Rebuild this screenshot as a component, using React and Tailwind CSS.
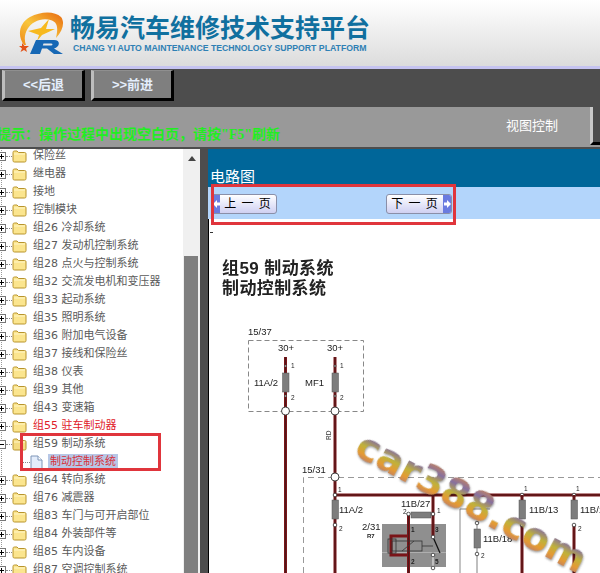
const cjk = "font-['DejaVu_Sans','Noto_Sans_CJK_SC',sans-serif]";
const arial = "font-['Liberation_Sans','Noto_Sans_CJK_SC',sans-serif]";

const treeRows = [
  { label: "保险丝" },
  { label: "继电器" },
  { label: "接地" },
  { label: "控制模块" },
  { label: "组26 冷却系统" },
  { label: "组27 发动机控制系统" },
  { label: "组28 点火与控制系统" },
  { label: "组32 交流发电机和变压器" },
  { label: "组33 起动系统" },
  { label: "组35 照明系统" },
  { label: "组36 附加电气设备" },
  { label: "组37 接线和保险丝" },
  { label: "组38 仪表" },
  { label: "组39 其他" },
  { label: "组43 变速箱" },
  { label: "组55 驻车制动器", red: true },
  { label: "组59 制动系统", open: true },
  { label: "制动控制系统", child: true },
  { label: "组64 转向系统" },
  { label: "组76 减震器" },
  { label: "组83 车门与可开启部位" },
  { label: "组84 外装部件等" },
  { label: "组85 车内设备" },
  { label: "组87 空调控制系统" },
];

const Logo = () => (
  <svg width="46" height="44" viewBox="0 0 46 44" className="shrink-0">
    <defs>
      <linearGradient id="ring" x1="0" y1="1" x2="1" y2="0">
        <stop offset="0" stopColor="#ef8a1a" />
        <stop offset="0.45" stopColor="#f8c63c" />
        <stop offset="1" stopColor="#e8690f" />
      </linearGradient>
    </defs>
    <path
      d="M6 34C-1 25 1 12 12 6C23 0 37 0 43 6C47 11 45 20 38 27C40 18 40 12 34 9.5C25 6 14 10 9.5 18C6.5 23 6 29 8 34Z"
      fill="url(#ring)"
    />
    <path d="M10 20L23 17L31 8L28 18L37 18L24 24L19 30L21 24Z" fill="#f7b91e" />
    <path d="M4 32L6.5 35L11 35L8 37.5L9 41L6 39L2.5 41L4 37.5L1 35L4 35Z" fill="#e2531a" />
    <path
      d="M12 43L18 29H36C43 29 42 36 36 37.5L45 43H36L29 37.5H24L22 43ZM25.5 32.5L24.8 34.5H33C35 34.5 35 32.5 33 32.5Z"
      fill="#1768b5"
      fillRule="evenodd"
    />
  </svg>
);

const NavButton = ({ children }) => (
  <button className="w-[83px] h-[31px] bg-[#7f7f7f] border-l-[3px] border-l-[#bdbdbd] border-t border-t-[#8f8f8f] border-r-[3px] border-r-black border-b-[3px] border-b-black text-[13px] font-bold text-[#e4eefc] font-['Liberation_Sans','Noto_Sans_CJK_SC',sans-serif]">
    {children}
  </button>
);

const Folder = ({ open }) => (
  <svg width="15" height="14" viewBox="0 0 15 14" className="shrink-0">
    <path
      d="M1 3.5C1 2.5 1.5 2 2.5 2H5L6.5 3.5H12.5C13.5 3.5 14 4 14 5V11.5C14 12.5 13.5 13 12.5 13H2.5C1.5 13 1 12.5 1 11.5Z"
      fill={open ? "#f4dc82" : "#fbe58e"}
      stroke="#b8942c"
      strokeWidth="1"
    />
    <path d="M2 5H13" stroke="#fff6c8" strokeWidth="1" />
  </svg>
);

const Expander = ({ open }) => (
  <span className="relative -ml-[5px] w-[9px] h-[9px] shrink-0 border border-[#777] bg-white">
    <span className="absolute left-[1px] top-[3px] w-[5px] h-px bg-black" />
    {!open && <span className="absolute left-[3px] top-[1px] w-px h-[5px] bg-black" />}
  </span>
);

const TreeRow = ({ row }) => {
  if (row.child) {
    return (
      <div className="flex items-center h-[18px] pl-[20px]">
        <span className="w-[8px] border-t border-dotted border-[#888]" />
        <svg width="13" height="15" viewBox="0 0 13 15" className="shrink-0">
          <path d="M1 1H8L12 5V14H1Z" fill="#e4edfb" stroke="#7f96b8" />
          <path d="M8 1V5H12" fill="#fff" stroke="#7f96b8" />
        </svg>
        <span className="ml-[5px] px-[2px] h-[16px] leading-[16px] bg-[#b7c7e6] text-[11px] text-[#d8323c]">
          {row.label}
        </span>
      </div>
    );
  }
  return (
    <div className="flex items-center h-[18px]">
      <Expander open={row.open} />
      <span className="w-[6px] border-t border-dotted border-[#888]" />
      <Folder open={row.open} />
      <span className={`ml-[6px] text-[11px] whitespace-nowrap ${row.red ? "text-[#e0202a]" : "text-[#5a5a5a]"}`}>
        {row.label}
      </span>
    </div>
  );
};

const PageButton = ({ children, next }) => (
  <button
    className={`flex items-center w-[66px] h-[20px] rounded-[3px] border border-[#8a8fa8] bg-gradient-to-b from-white to-[#cfd0f2] overflow-hidden ${next ? "flex-row-reverse" : ""}`}
  >
    <span className="flex items-center justify-center w-[8px] h-full bg-[#6a7be0] text-white">
      <svg width="7" height="8" viewBox="0 0 7 8">
        {next ? <path d="M0 2.5H3V0L7 4L3 8V5.5H0Z" fill="#fff" /> : <path d="M7 2.5H4V0L0 4L4 8V5.5H7Z" fill="#fff" />}
      </svg>
    </span>
    <span className="flex-1 text-center text-[12px] leading-none text-black tracking-[1px]">{children}</span>
  </button>
);

const Wire = ({ d, w = 3 }) => (
  <>
    <path d={d} fill="none" stroke="#7a1418" strokeWidth={w} />
    <path d={d} fill="none" stroke="#3a1a1a" strokeWidth="0.7" />
  </>
);

const Dot = ({ x, y, r = 1.8 }) => <circle cx={x} cy={y} r={r} fill="#fff" stroke="#333" strokeWidth="0.8" />;

const Junction = ({ x, y }) => <circle cx={x} cy={y} r="4" fill="#fff" stroke="#444" strokeWidth="1" />;

const VFuse = ({ x, y, h = 19 }) => <rect x={x - 3} y={y} width="6.5" height={h} fill="#7d7d7d" stroke="#555" strokeWidth="0.5" />;

const Lbl = ({ x, y, size = 9.5, weight = 400, fill = "#222", children }) => (
  <text x={x} y={y} fontSize={size} fontWeight={weight} fill={fill} fontFamily="Liberation Sans, sans-serif">
    {children}
  </text>
);

const Diagram = () => (
  <svg width="391" height="273" viewBox="209 300 391 273" className="block blur-[0.3px]">
    <defs>
      <linearGradient id="mark" gradientUnits="userSpaceOnUse" x1="0" y1="484" x2="0" y2="516" spreadMethod="repeat">
        <stop offset="0" stopColor="#c9875a" />
        <stop offset="0.3" stopColor="#86709f" />
        <stop offset="0.6" stopColor="#bfb23a" />
        <stop offset="0.85" stopColor="#e59a33" />
        <stop offset="1" stopColor="#c9875a" />
      </linearGradient>
    </defs>

    <Lbl x={248} y={335}>15/37</Lbl>
    <rect x="248.5" y="340.5" width="115" height="71" fill="none" stroke="#888" strokeDasharray="5 3" />
    <Lbl x={278} y={351}>30+</Lbl>
    <Lbl x={327} y={351}>30+</Lbl>

    <Wire d="M285.5 357V573" />
    <Wire d="M335 357V573" />
    <VFuse x={285.5} y={373} />
    <VFuse x={335} y={373} />
    <Dot x={285.5} y={366} r={1} />
    <Dot x={285.5} y={396} r={1} />
    <Dot x={335} y={366} r={1} />
    <Dot x={335} y={396} r={1} />
    <Lbl x={291} y={368} size={6.5}>1</Lbl>
    <Lbl x={291} y={400} size={6.5}>2</Lbl>
    <Lbl x={340} y={368} size={6.5}>1</Lbl>
    <Lbl x={340} y={400} size={6.5}>2</Lbl>
    <Lbl x={254} y={386}>11A/2</Lbl>
    <Lbl x={305} y={386}>MF1</Lbl>
    <Junction x={285.5} y={411} />
    <Junction x={335} y={411} />
    <text x="331" y="440" fontSize="6.5" fill="#333" fontFamily="Liberation Sans, sans-serif" transform="rotate(-90 331 440)">RD</text>

    <Lbl x={302} y={473}>15/31</Lbl>
    <path d="M303.5 573V477.5H600" fill="none" stroke="#999" strokeDasharray="6 4" />
    <Junction x={335} y={477} />

    <Wire d="M335 495H600" />
    <Dot x={335} y={495} />
    <Dot x={522} y={495} />
    <Dot x={574} y={495} />
    <Lbl x={338} y={492} size={6.5}>1</Lbl>
    <Lbl x={524} y={491} size={6.5}>1</Lbl>
    <Lbl x={576} y={491} size={6.5}>1</Lbl>

    <VFuse x={335} y={500} />
    <Dot x={335} y={525} />
    <Lbl x={339} y={513}>11A/2</Lbl>
    <Lbl x={339} y={531} size={6.5}>2</Lbl>

    <Wire d="M522 495V503M522 525V573" />
    <VFuse x={522} y={500} />
    <Dot x={522} y={525} />
    <Lbl x={529} y={513}>11B/13</Lbl>

    <Wire d="M574 495V503M574 525V573" />
    <VFuse x={574} y={500} />
    <Dot x={574} y={525} />
    <Lbl x={580} y={513}>11B/1</Lbl>
    <Lbl x={578} y={531} size={6.5}>2</Lbl>

    <rect x="382" y="524" width="64" height="43" fill="#8f8f8f" />
    <path d="M382 552.5H446" stroke="#c4c4c4" strokeWidth="0.6" />
    <Wire d="M433 495V537" />
    <Wire d="M408.5 513V573" />
    <path d="M408 536H391V555H408" fill="none" stroke="#7a1418" strokeWidth="3" />
    <rect x="392" y="541" width="30" height="10" fill="none" stroke="#333" strokeWidth="0.8" />
    <rect x="388" y="539" width="8" height="14" fill="none" stroke="#333" strokeWidth="0.8" />
    <path d="M402 551L414 541M422 546H433" fill="none" stroke="#333" strokeWidth="0.8" />
    <path d="M433 537L440 553" stroke="#111" strokeWidth="1.2" />
    <path d="M433 555V568" stroke="#eee" strokeWidth="1" />
    <rect x="411" y="512" width="20" height="6" fill="#7d7d7d" stroke="#555" strokeWidth="0.5" />
    <Dot x={408.5} y={514} />
    <Dot x={433} y={514} />
    <Dot x={433} y={537} />
    <Dot x={433} y={555} />
    <Dot x={433} y={568} />
    <Lbl x={401} y={507}>11B/27</Lbl>
    <Lbl x={403} y={514} size={6.5}>2</Lbl>
    <Lbl x={437} y={513} size={6.5}>1</Lbl>
    <Lbl x={362} y={530}>2/31</Lbl>
    <Lbl x={367} y={538} size={6} weight={700}>R7</Lbl>
    <Lbl x={411} y={532} size={6.5} weight={700}>1</Lbl>
    <Lbl x={435} y={532} size={6.5} weight={700}>3</Lbl>
    <Lbl x={411} y={564} size={6.5} weight={700}>2</Lbl>
    <Lbl x={435} y={564} size={6.5} weight={700}>5</Lbl>

    <path d="M460 573V509H490" fill="none" stroke="#888" />
    <path d="M477 523V573" stroke="#aaa" strokeWidth="1.5" />
    <VFuse x={477} y={529} />
    <Dot x={477} y={523} />
    <Dot x={477} y={554} />
    <Lbl x={483} y={542}>11B/18</Lbl>
    <Lbl x={481} y={558} size={6.5}>2</Lbl>

    <text
      x="473"
      y="516"
      textAnchor="middle"
      fontSize="39"
      fontWeight="700"
      fontFamily="DejaVu Sans, sans-serif"
      fill="url(#mark)"
      transform="rotate(28 473 500)"
      className="drop-shadow-[1px_1px_1px_rgba(0,0,0,0.4)]"
    >
      car388.com
    </text>
  </svg>
);

export default function App() {
  return (
    <div className="relative w-[600px] h-[573px] overflow-hidden bg-[#4d4d4d] flex flex-col">
      {/* logo header */}
      <div className="h-[66px] shrink-0 flex items-center pl-[18px] bg-gradient-to-b from-white to-[#dcdcdc]">
        <Logo />
        <div className="ml-[6px] -mt-[1px] flex flex-col">
          <div className="text-[25px] leading-[30px] font-bold text-[#10709f] whitespace-nowrap font-['Noto_Sans_CJK_SC',sans-serif]">
            畅易汽车维修技术支持平台
          </div>
          <div className={`ml-[3px] mt-[2px] text-[8.7px] leading-[11px] font-bold text-[#2f80b4] whitespace-nowrap ${arial}`}>
            CHANG YI AUTO MAINTENANCE TECHNOLOGY SUPPORT PLATFORM
          </div>
        </div>
      </div>
      <div className="h-[3px] shrink-0 bg-[#c5c3f0]" />

      {/* back / forward */}
      <div className="h-[38px] shrink-0 flex gap-[6px] pl-[2px] pt-px">
        <NavButton>&lt;&lt;后退</NavButton>
        <NavButton>&gt;&gt;前进</NavButton>
      </div>

      {/* hint bar */}
      <div className="h-[40px] shrink-0 flex bg-[#999]">
        <div className="-ml-[3px] self-end mb-[3px] text-[14px] leading-[18px] font-bold text-[#22ee22] whitespace-nowrap font-['Liberation_Serif','Noto_Sans_CJK_SC',serif]">
          提示：操作过程中出现空白页，请按"F5"刷新
        </div>
        <div className={`ml-[226px] mt-[11px] text-[13px] leading-[16px] text-white whitespace-nowrap ${arial}`}>
          视图控制
        </div>
        <div className="ml-auto w-[10px] h-[38px] border-l-[3px] border-[#c9c9c9] bg-[#4d4d4d] border-b-[3px] border-b-black" />
      </div>

      <div className="flex-1 min-h-0 flex pt-[2px]">
        {/* tree */}
        <div className="w-[200px] shrink-0 flex bg-white">
          <div className={`flex-1 overflow-hidden ${cjk}`}>
            <div className="-mt-[2px] border-l border-dotted border-[#999] ml-px">
              {treeRows.map((row) => (
                <TreeRow key={row.label} row={row} />
              ))}
            </div>
          </div>
          <div className="w-[17px] flex flex-col bg-[#f0f0f0] px-px">
            <div className="h-[107px] shrink-0 flex justify-center pt-[7px]">
              <span className="w-0 h-0 border-x-[4px] border-x-transparent border-b-[5px] border-b-[#444]" />
            </div>
            <div className="flex-1 w-[14px] bg-[#7f7f7f]" />
          </div>
        </div>
        <div className="w-[8px] shrink-0" />

        {/* circuit page */}
        <div className="flex-1 min-w-0 flex flex-col">
          <div className="h-[38px] shrink-0 bg-[#006699] flex items-end pl-[2px] pb-px">
            <span className={`text-[15px] leading-[18px] text-white ${arial}`}>电路图</span>
          </div>
          <div className={`h-[32px] shrink-0 bg-[#b3d5fb] flex items-start pt-[7px] pl-[3px] gap-[109px] ${arial}`}>
            <PageButton>上 一 页</PageButton>
            <PageButton next>下 一 页</PageButton>
          </div>
          <div className="relative flex-1 min-h-0 bg-white border-l border-black overflow-hidden">
            <span className="absolute left-px top-[13px] w-[3px] h-px bg-[#333]" />
            <div className="pt-[40px] pl-[13px] h-[81px] text-[17px] tracking-[0.4px] leading-[20px] font-bold text-[#222] whitespace-pre-line blur-[0.3px] font-['Liberation_Sans','Noto_Sans_CJK_SC',sans-serif]">
              {"组59 制动系统\n制动控制系统"}
            </div>
            <Diagram />
          </div>
        </div>
      </div>

      {/* red annotation boxes */}
      <div className="absolute left-[20px] top-[433px] w-[141px] h-[38px] border-[3px] border-[#e0353c]" />
      <div className="absolute left-[211px] top-[184px] w-[245px] h-[41px] border-[3px] border-[#e0353c]" />
    </div>
  );
}
